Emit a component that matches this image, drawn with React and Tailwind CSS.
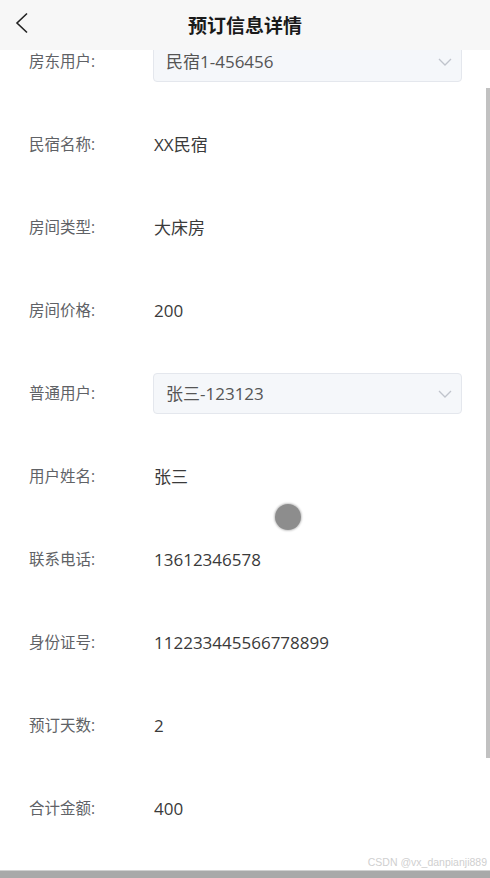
import React from "react";

const rows = [
  { label: "房东用户:", value: "民宿1-456456", select: true },
  { label: "民宿名称:", value: "XX民宿" },
  { label: "房间类型:", value: "大床房" },
  { label: "房间价格:", value: "200" },
  { label: "普通用户:", value: "张三-123123", select: true },
  { label: "用户姓名:", value: "张三" },
  { label: "联系电话:", value: "13612346578" },
  { label: "身份证号:", value: "112233445566778899" },
  { label: "预订天数:", value: "2" },
  { label: "合计金额:", value: "400" },
];

const font = { fontFamily: '"Open Sans", "Noto Sans CJK SC", sans-serif' };

export default function App() {
  return (
    <div className="relative w-[490px] h-[878px] overflow-hidden bg-white" style={font}>
      <div className="flex flex-col pt-[20px]">
        {rows.map((r, i) => (
          <div key={i} className="h-[83px] flex items-center">
            <div className="w-[153px] shrink-0 pl-[29px] text-[15.5px] text-[#606266] whitespace-nowrap">{r.label}</div>
            {r.select ? (
              <div className="w-[309px] h-[41px] flex items-center justify-between pl-[12px] pr-[9px] bg-[#f5f7fa] border border-[#e4e7ed] rounded-[4px]">
                <span className="text-[17px] text-[#555]">{r.value}</span>
                <svg width="14" height="8" viewBox="0 0 14 8" fill="none">
                  <polyline points="1,1 7,7 13,1" stroke="#c0c4cc" strokeWidth="1.3" />
                </svg>
              </div>
            ) : (
              <div className="pl-[1px] text-[17px] text-[#3a3a3a]">{r.value}</div>
            )}
          </div>
        ))}
      </div>

      <div className="absolute top-0 left-0 w-full h-[50px] bg-[#f7f7f7] flex items-center justify-center">
        <svg className="absolute left-[14px] top-[12px]" width="16" height="22" viewBox="0 0 16 22" fill="none">
          <polyline points="13,1.5 3,11 13,20.5" stroke="#222" strokeWidth="1.6" />
        </svg>
        <span className="text-[19px] font-bold text-[#1a1a1a]" style={{ fontFamily: '"Noto Sans CJK SC", sans-serif' }}>预订信息详情</span>
      </div>

      <div className="absolute left-[486px] top-[88px] w-[4px] h-[670px] bg-[#c1c1c1]" />

      <div className="absolute left-[275px] top-[504px] w-[26px] h-[26px] rounded-full bg-[#8d8d8d] shadow-[0_0_2px_1px_#c8c8c8]" />

      <div className="absolute right-[3px] bottom-[7px] text-[10.5px] text-[#cfcfcf] whitespace-nowrap" style={{ fontFamily: '"Liberation Sans", sans-serif' }}>
        CSDN @vx_danpianji889
      </div>
      <div className="absolute left-0 bottom-0 w-full h-[8px] bg-[#a9a9a9] border-t border-[#d0d0d0]" />
    </div>
  );
}
